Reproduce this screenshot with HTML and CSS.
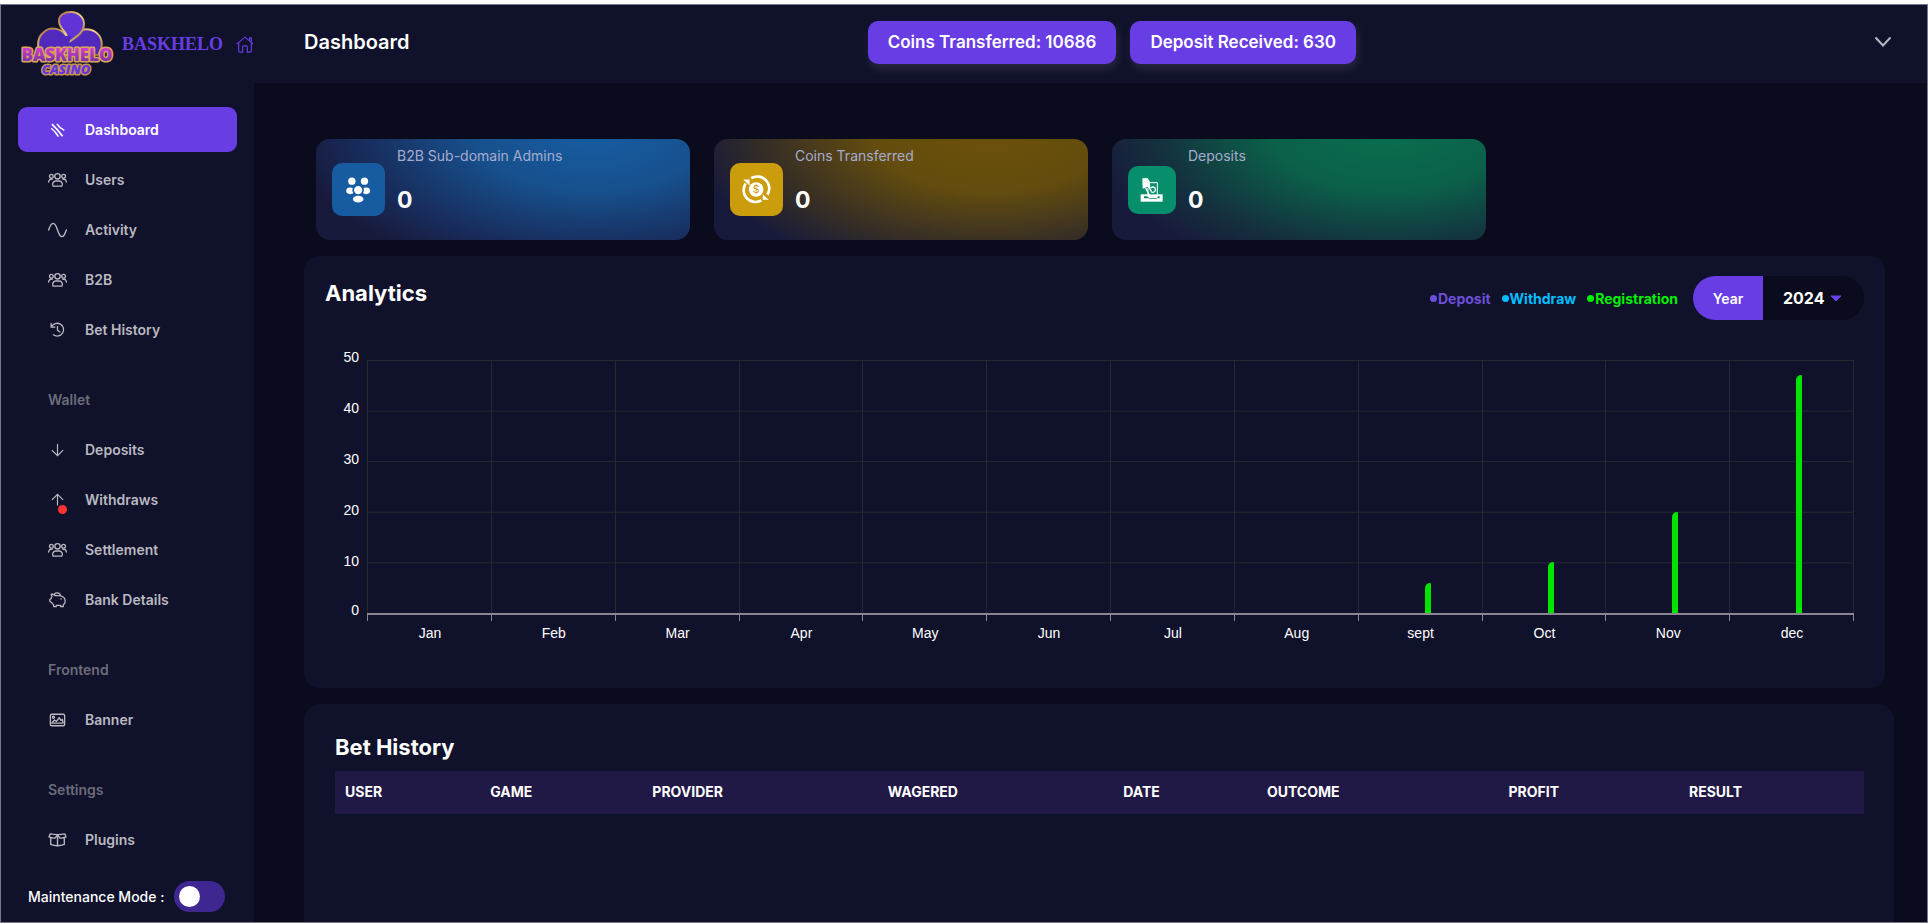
FILE: index.html
```html
<!DOCTYPE html>
<html lang="en">
<head>
<meta charset="utf-8">
<title>Dashboard</title>
<link rel="stylesheet" href="styles.css">
</head>
<body>
<svg class="sprite" aria-hidden="true">
  <symbol id="i-users" viewBox="0 0 56 44"><g fill="none" stroke="currentColor" stroke-width="4" stroke-linecap="round" stroke-linejoin="round"><circle cx="28" cy="11" r="8"/><path d="M15 40c-4-8 1-15 8-15h10c7 0 12 7 8 15z"/><circle cx="10" cy="11" r="5.500"/><circle cx="46" cy="11" r="5.500"/><path d="M2 28c0-6 4-9 10-8M54 28c0-6-4-9-10-8"/></g></symbol>
  <symbol id="i-gift" viewBox="0 0 56 44"><g fill="none" stroke="currentColor" stroke-width="4" stroke-linejoin="round" stroke-linecap="round"><path d="M6 4q22 4 44 0l3 9q-12 5-18 3l-7-9-7 9q-6 2-18-3z"/><path d="M8 17v18q20 8 40 0V17M28 9v31"/></g></symbol>
</svg>
<div class="shell">
  <aside class="sidebar">
    <div class="brand">
      <svg class="logo" viewBox="0 0 100 68" role="img" aria-label="Baskhelo Casino">
        <defs>
          <linearGradient id="gold" x1="0" y1="0" x2="1" y2="1"><stop offset="0" stop-color="#a8713a"/><stop offset=".5" stop-color="#f2cf8f"/><stop offset="1" stop-color="#a06a30"/></linearGradient>
          <linearGradient id="pink" x1="0" y1="0" x2="0" y2="1"><stop offset=".2" stop-color="#d63fd0"/><stop offset="1" stop-color="#5a2c9c"/></linearGradient>
        </defs>
        <g fill="#5229bd" stroke="url(#gold)" stroke-width="2">
          <path d="M52 30C46 17 33 16 27 22c-8 6-7 17-2 23h56c6-8 5-19-4-24-8-4-18-1-25 9z"/>
          <path d="M50 28c0-7-8-9-8-17C42 5 47 2 54 2s13 5 13 12c0 8-6 12-15 18z" fill="#6034d6"/>
        </g>
        <path d="M47 26h7l-3 12z" fill="#5229bd"/>
        <g font-family="Open Sans, sans-serif" font-weight="800" text-anchor="middle" paint-order="stroke" stroke-linejoin="round">
          <text x="50" y="51" font-size="17" fill="url(#pink)" stroke="#d9a45b" stroke-width="3">BASKHELO</text>
          <text x="49" y="64" font-size="13" font-style="italic" fill="#6236e0" stroke="#c9924d" stroke-width="3">CASINO</text>
        </g>
      </svg>
      <span class="brand-name">BASKHELO</span>
      <a class="home" href="#" aria-label="Home"><svg viewBox="0 0 54 50"><path d="M2 24L27 3l25 21M8 20v24q0 4 4 4h8V32q0-3 3-3h8q3 0 3 3v16h8q4 0 4-4V20M41 13V5h5v12" fill="none" stroke="currentColor" stroke-width="3.500"/></svg></a>
    </div>
    <nav class="nav">
      <a class="item active" href="#"><svg class="ico" viewBox="0 0 54 54"><g stroke="currentColor" fill="none"><path d="M8 7q20 18 36 41" stroke-width="6"/><path d="M6 21q14 11 24 28M25 6q7 12 25 22" stroke-width="5"/></g></svg>Dashboard</a>
      <a class="item" href="#"><svg class="ico"><use href="#i-users"/></svg>Users</a>
      <a class="item" href="#"><svg class="ico" viewBox="0 0 56 44"><path d="M2 22C10-4 20-4 28 22S46 48 54 22" fill="none" stroke="currentColor" stroke-width="4" stroke-linecap="round"/></svg>Activity</a>
      <a class="item" href="#"><svg class="ico"><use href="#i-users"/></svg>B2B</a>
      <a class="item" href="#"><svg class="ico" viewBox="0 0 56 50"><path d="M9 15A20 20 0 1 1 15 40M8 4v12h12M28 14v12l8 5" fill="none" stroke="currentColor" stroke-width="4" stroke-linecap="round"/></svg>Bet History</a>
      <h2 class="section">Wallet</h2>
      <a class="item" href="#"><svg class="ico" viewBox="0 0 56 54"><path d="M28 8v37M10 28l18 18 18-18" fill="none" stroke="currentColor" stroke-width="4" stroke-linecap="round"/></svg>Deposits</a>
      <a class="item alert" href="#"><svg class="ico" viewBox="0 0 56 54"><path d="M28 44V8M10 26L28 8l18 18" fill="none" stroke="currentColor" stroke-width="4" stroke-linecap="round"/></svg>Withdraws</a>
      <a class="item" href="#"><svg class="ico"><use href="#i-users"/></svg>Settlement</a>
      <a class="item" href="#"><svg class="ico" viewBox="0 0 56 50"><g fill="none" stroke="currentColor" stroke-width="4" stroke-linejoin="round" stroke-linecap="round"><path d="M20 11h16q16 4 16 17 0 8-6 12v6h-8v-4H24v4h-8v-6q-5-3-7-8l-5-2v-7l4-2q0-4 3-7l-3-7q6-1 12 4zM18 10c0-10 17-10 19 0"/></g><circle cx="39" cy="22" r="2.500" fill="currentColor"/></svg>Bank Details</a>
      <h2 class="section">Frontend</h2>
      <a class="item" href="#"><svg class="ico" viewBox="0 0 56 44"><g fill="none" stroke="currentColor" stroke-width="4" stroke-linejoin="round"><rect x="7" y="5" width="42" height="34" rx="4"/><path d="M10 31h36M12 30l7-8 6 4 8-11 5 8 4-3 3 10"/><circle cx="16" cy="14" r="3"/></g></svg>Banner</a>
      <h2 class="section">Settings</h2>
      <a class="item" href="#"><svg class="ico"><use href="#i-gift"/></svg>Plugins</a>
    </nav>
    <label class="maint">Maintenance Mode : <input class="switch" type="checkbox"></label>
  </aside>
  <div class="main">
    <header class="topbar">
      <h1 class="page-title">Dashboard</h1>
      <div class="pills"><button class="pill" type="button">Coins Transferred: 10686</button><button class="pill" type="button">Deposit Received: 630</button></div>
      <button class="menu" type="button" aria-label="Account menu"><svg viewBox="0 0 18 12"><path d="M2 2l7 7.500L16 2" fill="none" stroke="currentColor" stroke-width="2" stroke-linecap="round"/></svg></button>
    </header>
    <main class="content">
      <section class="cards">
        <article class="card blue">
          <div class="tile"><svg viewBox="0 0 160 160" fill="#fff"><circle cx="60" cy="55" r="11"/><circle cx="98" cy="55" r="11"/><ellipse cx="55" cy="84" rx="12" ry="10"/><ellipse cx="103" cy="84" rx="12" ry="10"/><circle cx="79" cy="82" r="15" stroke="#175ba0" stroke-width="5"/><ellipse cx="79" cy="109" rx="16" ry="10"/></svg></div>
          <div><h3 class="card-label">B2B Sub-domain Admins</h3><p class="card-value">0</p></div>
        </article>
        <article class="card gold">
          <div class="tile"><svg viewBox="0 0 160 160" fill="#fff"><g fill="none" stroke="#fff" stroke-width="8"><path d="M64 46A36 36 0 0 1 113 96"/><path d="M95 113A36 36 0 0 1 47 62"/></g><path d="M40 50h19v18zM99 111V95l18 16z"/><circle cx="79" cy="80" r="22"/><text x="79" y="91" text-anchor="middle" font-family="Inter, sans-serif" font-size="32" fill="#cb9c0b">$</text></svg></div>
          <div><h3 class="card-label">Coins Transferred</h3><p class="card-value">0</p></div>
        </article>
        <article class="card green">
          <div class="tile small"><svg viewBox="0 0 144 144"><path d="M43 37l15-1 7 9 2 22-10-4-13 5z" fill="#fff"/><path d="M38 85h66v22H38z" fill="#fff"/><path d="M48 91h12l4 8h22l4-8h5v6H48z" fill="#078a68"/><path d="M66 50h22v42H60V66" fill="none" stroke="#fff" stroke-width="3"/><path d="M52 65l12 22M62 62l8 14M68 66a8 8 0 1 1 1 11" fill="none" stroke="#fff" stroke-width="4"/></svg></div>
          <div><h3 class="card-label">Deposits</h3><p class="card-value">0</p></div>
        </article>
      </section>
      <section class="panel analytics">
        <div class="panel-head">
          <h2 class="panel-title">Analytics</h2>
          <div class="legend"><span class="deposit">Deposit</span><span class="withdraw">Withdraw</span><span class="registration">Registration</span></div>
          <div class="period">
            <button class="period-year" type="button">Year</button>
            <label class="year-pick"><select aria-label="Year"><option>2024</option></select><svg viewBox="0 0 12 7"><path d="M1 1h10L6 6z" fill="#6b3fe8" stroke="#6b3fe8" stroke-linejoin="round"/></svg></label>
          </div>
        </div>
        <div class="chart">
          <div class="y-axis"><span>50</span><span>40</span><span>30</span><span>20</span><span>10</span><span>0</span></div>
          <div class="plot">
            <div class="month"></div><div class="month"></div><div class="month"></div><div class="month"></div><div class="month"></div><div class="month"></div><div class="month"></div><div class="month"></div>
            <div class="month"><i class="bar" style="height:12%"></i></div>
            <div class="month"><i class="bar" style="height:20%"></i></div>
            <div class="month"><i class="bar" style="height:40%"></i></div>
            <div class="month"><i class="bar" style="height:94%"></i></div>
          </div>
          <div class="x-axis"><span>Jan</span><span>Feb</span><span>Mar</span><span>Apr</span><span>May</span><span>Jun</span><span>Jul</span><span>Aug</span><span>sept</span><span>Oct</span><span>Nov</span><span>dec</span></div>
        </div>
      </section>
      <section class="panel bets">
        <h2 class="panel-title">Bet History</h2>
        <table>
          <colgroup><col class="c-user"><col class="c-game"><col class="c-provider"><col class="c-wagered"><col class="c-date"><col class="c-outcome"><col class="c-profit"><col></colgroup>
          <thead><tr><th>USER</th><th>GAME</th><th>PROVIDER</th><th>WAGERED</th><th>DATE</th><th>OUTCOME</th><th>PROFIT</th><th>RESULT</th></tr></thead>
        </table>
      </section>
    </main>
  </div>
</div>
</body>
</html>
```
FILE: styles.css
```css
:root {
  --panel: #10112b;
  --page: #0a0b1c;
  --accent: #683de4;
  --rule: #272830;
  --axis: #8a8793;
}
* { box-sizing: border-box; }
body {
  margin: 0;
  padding: 4px 0 1px;
  background: #fff;
  color: #fff;
  font-family: Inter, "Open Sans", sans-serif;
  font-size: 14px;
}
h1, h2, h3, p { margin: 0; }
button, select { font: inherit; color: inherit; border: 0; padding: 0; background: none; }
.sprite { display: none; }
.shell {
  display: grid;
  grid-template-columns: 253px minmax(0, 1fr);
  min-height: calc(100vh - 5px);
  border: 1px solid #77788a;
  background: var(--page);
}

/* Sidebar */
.sidebar { background: var(--panel); display: flex; flex-direction: column; }
.brand { display: flex; align-items: center; height: 78px; padding-left: 16px; }
.logo { width: 100px; height: 68px; flex: none; }
.brand-name { margin-left: 5px; font: bold 18px "Liberation Serif", serif; color: var(--accent); }
.home { margin-left: auto; color: var(--accent); }
.home svg { display: block; width: 18px; height: 17px; }
.nav { display: flex; flex-direction: column; gap: 5px; padding: 24px 17px 0; }
.item {
  position: relative;
  display: flex;
  align-items: center;
  gap: 18px;
  height: 45px;
  padding-left: 30px;
  border-radius: 9px;
  color: #b9b9c0;
  font-weight: 600;
  text-decoration: none;
}
.item.active { background: var(--accent); color: #fff; }
.ico { width: 19px; height: 16px; flex: none; }
.item.alert::after {
  content: "";
  position: absolute;
  left: 40px;
  top: 28px;
  width: 9px;
  height: 9px;
  border-radius: 50%;
  background: #ff3333;
}
.section { height: 45px; margin-top: 20px; padding-left: 30px; font-size: 14px; line-height: 45px; font-weight: 600; color: #6c6d79; }
.maint { display: flex; align-items: center; gap: 10px; padding: 19px 0 8px 27px; font-weight: 500; white-space: nowrap; }
.switch {
  appearance: none;
  width: 51px;
  height: 31px;
  margin: 0;
  padding: 5px;
  border-radius: 16px;
  background: #3e2790;
}
.switch::before { content: ""; display: block; width: 21px; height: 21px; border-radius: 50%; background: #fff; }

/* Top bar */
.main { display: flex; flex-direction: column; }
.topbar {
  display: grid;
  grid-template-columns: 35.5% auto 1fr;
  align-items: center;
  height: 78px;
  padding: 0 35px 4px 50px;
  background: var(--panel);
}
.page-title { font-size: 20px; font-weight: 600; }
.pills { display: flex; gap: 14px; }
.pill {
  height: 43px;
  padding: 0 20px;
  border-radius: 10px;
  background: var(--accent);
  font-size: 17px;
  font-weight: 600;
  white-space: nowrap;
  box-shadow: 2px 5px 10px #ffffff1a;
}
.menu { justify-self: end; color: #b5b6c0; }
.menu svg { display: block; width: 18px; height: 12px; }

.content { flex: 1; display: flex; flex-direction: column; gap: 16px; padding: 56px 33px 0 50px; }

/* Summary cards */
.cards { display: grid; grid-template-columns: repeat(4, minmax(0, 1fr)); gap: 24px; padding: 0 10px 0 12px; }
.card { display: flex; gap: 12px; height: 101px; padding: 0 16px; border-radius: 14px; }
.blue { background: radial-gradient(ellipse 80% 150% at 74% -8%, #165da3, #17508d 40%, #182c5c 78%, #181a3b); }
.gold { background: radial-gradient(ellipse 80% 150% at 74% -8%, #6c5109, #634c0e 40%, #332c27 78%, #181a3b); }
.green { background: radial-gradient(ellipse 80% 150% at 74% -8%, #096e50, #0b6049 40%, #14303e 78%, #181a3b); }
.tile { width: 53px; height: 53px; align-self: center; border-radius: 10px; }
.tile.small { width: 48px; height: 48px; }
.tile svg { display: block; width: 100%; height: 100%; }
.blue .tile { background: #175ba0; }
.gold .tile { background: #cb9c0b; }
.green .tile { background: #078f6b; }
.card-label { margin-top: 7px; font-size: 14px; line-height: 20px; font-weight: 400; color: #a6acd0; }
.card-value { margin-top: 19px; font-size: 23px; line-height: 30px; font-weight: 700; }

/* Panels */
.panel { background: var(--panel); border-radius: 14px; }
.panel-title { font-size: 22px; line-height: 28px; font-weight: 700; }
.analytics { margin-right: 9px; padding: 20px 21px 46px; }
.panel-head { display: flex; align-items: center; }
.panel-head .panel-title { align-self: flex-start; margin-top: 3px; }
.legend { display: flex; gap: 11px; margin-left: auto; font-size: 14px; font-weight: 700; }
.legend span { display: flex; align-items: center; gap: 1px; }
.legend span::before { content: ""; width: 7px; height: 7px; border-radius: 50%; background: currentColor; }
.deposit { color: #6c50d8; }
.withdraw { color: #00bfff; }
.registration { color: #00f000; }
.period { display: flex; height: 44px; margin-left: 15px; overflow: hidden; border-radius: 22px; background: var(--page); }
.period-year { width: 70px; background: var(--accent); font-weight: 600; }
.year-pick { display: flex; align-items: center; gap: 5px; padding: 0 22px 0 20px; font-size: 16px; font-weight: 700; }
.year-pick select { appearance: none; }
.year-pick svg { width: 12px; height: 7px; }

.chart { display: grid; grid-template-columns: 34px 1fr; column-gap: 8px; margin: 40px 10px 0 0; font-family: "Liberation Sans", sans-serif; font-size: 14px; }
.y-axis { display: flex; flex-direction: column; justify-content: space-between; margin: -11px 0 -3px; text-align: right; line-height: 16px; }
.plot { display: grid; grid-template-columns: repeat(12, 1fr); height: 255px; border-bottom: 2px solid var(--axis); border-right: 1px solid var(--rule); }
.month {
  position: relative;
  display: flex;
  align-items: flex-end;
  justify-content: center;
  padding-left: 15px;
  border-left: 1px solid var(--rule);
  background: linear-gradient(var(--rule) 1px, transparent 1px) 0 0 / 100% 20%;
}
.month::after, .plot > :last-child::before {
  content: "";
  position: absolute;
  left: -1px;
  top: 100%;
  width: 1px;
  height: 8px;
  background: var(--axis);
}
.plot > :last-child::before { left: 100%; }
.bar { width: 6px; background: #00e400; border-radius: 5px 1px 0 0; }
.x-axis { grid-column: 2; display: grid; grid-template-columns: repeat(12, 1fr); margin-top: 9px; padding-left: 1px; text-align: center; line-height: 18px; }
.y-axis span:last-child { margin-top: -2px; }

.bets { flex: 1; padding: 29px 30px 0 31px; border-radius: 16px 16px 0 0; }
table { width: 100%; margin-top: 10px; border-collapse: collapse; table-layout: fixed; background: #201845; }
th { height: 43px; padding: 0 0 2px 10px; text-align: left; font-size: 14px; font-weight: 700; }
.c-user { width: 9.5%; }
.c-game { width: 10.6%; }
.c-provider, .c-wagered { width: 15.4%; }
.c-date { width: 9.4%; }
.c-outcome { width: 15.8%; }
.c-profit { width: 11.8%; }
```
